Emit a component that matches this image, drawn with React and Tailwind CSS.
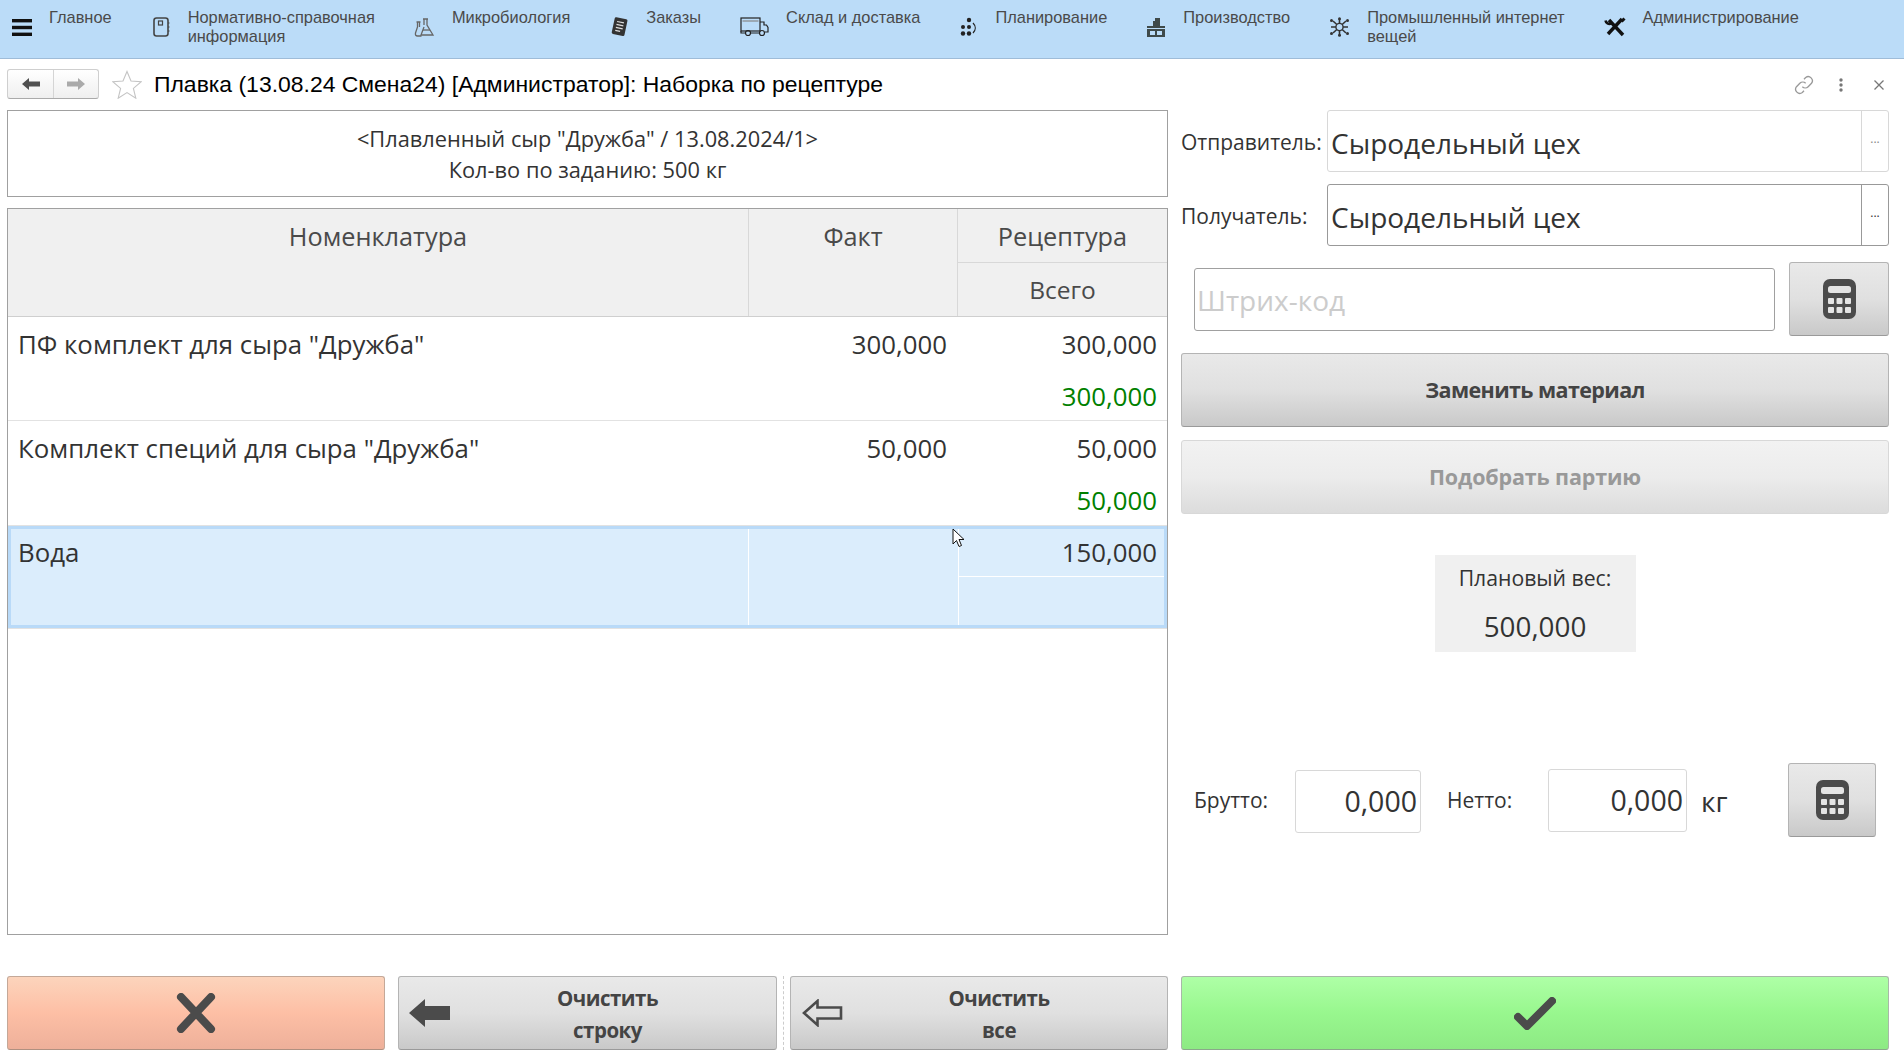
import React from "react";

const NavNotebook = () => (
  <svg width="20" height="20" viewBox="0 0 20 20" fill="none" stroke="#444" strokeWidth="1.6"><rect x="3" y="1" width="14" height="18" rx="2.5" /><rect x="7.5" y="4" width="4" height="4" strokeWidth="1.2" /><path d="M17 6h1.5M17 10h1.5M17 14h1.5" strokeWidth="1.2" /></svg>
);
const NavFlask = () => (
  <svg width="21" height="20" viewBox="0 0 21 20" fill="none" stroke="#666" strokeWidth="1.3"><path d="M9 2h5M10 2v6M13 2v6l6 10H7l3-8" /><path d="M2.5 5h4M3.5 5v5L1.5 16c-.5 2 .5 3 2 3h4M5.5 5v5" /><path d="M9 13h7" /></svg>
);
const NavOrders = () => (
  <svg width="20" height="20" viewBox="0 0 20 20"><g transform="rotate(12 10 10)"><rect x="4" y="1" width="13" height="17" rx="1.5" fill="#333" /><path d="M7 5h7M7 8h7M7 11h7M7 14h5" stroke="#ddd" strokeWidth="1.2" /></g></svg>
);
const NavTruck = () => (
  <svg width="29" height="20" viewBox="0 0 29 20" fill="none" stroke="#222" strokeWidth="1.2"><rect x="1" y="1" width="19" height="13" /><path d="M20 5h4v3h2.5l1.5 2.5V15h-3M1 14v2h4M11 16h8" /><circle cx="8" cy="16" r="2.5" /><circle cx="22" cy="16" r="2.5" /><path d="M2.5 4h16" stroke="#888" /></svg>
);
const NavPlan = () => (
  <svg width="19" height="20" viewBox="0 0 19 20" fill="#222"><circle cx="10" cy="3" r="2.2" /><circle cx="4" cy="10" r="2" /><circle cx="10" cy="10" r="2" /><circle cx="4" cy="16.5" r="2.2" /><circle cx="10" cy="16.5" r="2.2" /><path d="M14 6c3 3 3 7 0 10" fill="none" stroke="#222" strokeWidth="1.2" /></svg>
);
const NavFactory = () => (
  <svg width="20" height="20" viewBox="0 0 20 20"><path d="M1 20V9h6V4h2V1h5v8h5v11z" fill="#3f4a4a" /><rect x="4" y="14" width="5" height="4" fill="#bbdcf8" /><rect x="11" y="14" width="5" height="4" fill="#bbdcf8" /><rect x="1" y="11" width="18" height="1" fill="#bbdcf8" /></svg>
);
const NavIot = () => (
  <svg width="21" height="20" viewBox="0 0 21 20" stroke="#333" strokeWidth="1.6" fill="none"><path d="M10.5 2v16M2 10h17M4 4l13 12M17 4L4 16" /><circle cx="10.5" cy="10" r="3.6" fill="#bbdcf8" strokeWidth="1.4" /><circle cx="10.5" cy="1.8" r="1.5" fill="#333" stroke="none" /><circle cx="10.5" cy="18.2" r="1.5" fill="#333" stroke="none" /><circle cx="2.5" cy="3.5" r="1.5" fill="#333" stroke="none" /><circle cx="18.5" cy="3.5" r="1.5" fill="#333" stroke="none" /><circle cx="2.5" cy="16.5" r="1.5" fill="#333" stroke="none" /><circle cx="18.5" cy="16.5" r="1.5" fill="#333" stroke="none" /></svg>
);
const NavTools = () => (
  <svg width="22" height="20" viewBox="0 0 22 20" fill="none" stroke="#111"><path d="M5 3l14 15" strokeWidth="3.4" /><path d="M18 2L4 17" strokeWidth="3.4" /><path d="M1.5 3.5A4 4 0 0 0 7 6.5" strokeWidth="2.6" /><path d="M20.5 1.5l-3 3" strokeWidth="3" /></svg>
);

const Calc = () => (
  <svg width="33" height="40" viewBox="0 0 33 40"><rect width="33" height="40" rx="7" fill="#4b4b4b" /><rect x="5" y="7" width="23" height="7" rx="2.5" fill="#e4e4e4" />
    <g fill="#e4e4e4"><rect x="5" y="19" width="6" height="6" rx="1" /><rect x="13.5" y="19" width="6" height="6" rx="1" /><rect x="22" y="19" width="6" height="6" rx="1" /><rect x="5" y="28" width="6" height="6" rx="1" /><rect x="13.5" y="28" width="6" height="6" rx="1" /><rect x="22" y="28" width="6" height="6" rx="1" /></g>
  </svg>
);

const navItems = [
  [NavNotebook, ["Нормативно-справочная", "информация"]],
  [NavFlask, ["Микробиология"]],
  [NavOrders, ["Заказы"]],
  [NavTruck, ["Склад и доставка"]],
  [NavPlan, ["Планирование"]],
  [NavFactory, ["Производство"]],
  [NavIot, ["Промышленный интернет", "вещей"]],
  [NavTools, ["Администрирование"]],
];

const Row = ({ name, fact, plan, green, height }) => (
  <div className={"flex border-b border-[#e2e2e2] text-[#333] " + height}>
    <div className="w-[742px] pl-[10px] pt-[9px] leading-[36px]">{name}</div>
    <div className="w-[209px] pr-[12px] pt-[9px] text-right leading-[36px]">{fact}</div>
    <div className="flex-1 pr-[10px] pt-[9px] text-right leading-[36px]">
      <div>{plan}</div>
      <div className="mt-[16px] text-[#008000]">{green}</div>
    </div>
  </div>
);

const btnGray = "rounded-[3px] border border-[#b4b4b4] border-b-[#9a9a9a] bg-linear-to-b from-[#e9e9e9] via-[#e0e0e0] to-[#c9c9c9]";

export default function App() {
  return (
    <div className="relative flex h-[1058px] w-[1904px] flex-col overflow-hidden bg-white font-['Open_Sans',sans-serif]">
      <nav className="flex h-[59px] shrink-0 items-start gap-[39px] border-b border-[#9fbcd8] bg-[#bbdcf8] pl-[12px] font-['Liberation_Sans',sans-serif] text-[16.4px] leading-[19px] text-[#4a4a4a]">
        <div className="flex items-start gap-[17px]">
          <svg className="mt-[19px]" width="20" height="17" viewBox="0 0 20 17" fill="#111"><rect width="20" height="3.4" /><rect y="6.8" width="20" height="3.4" /><rect y="13.6" width="20" height="3.4" /></svg>
          <div className="pt-[8px]">Главное</div>
        </div>
        {navItems.map(([Icon, lines], i) => (
          <div key={i} className="flex items-start gap-[17px]">
            <div className="mt-[17px]"><Icon /></div>
            <div className="whitespace-nowrap pt-[8px]">{lines.map((l) => <div key={l}>{l}</div>)}</div>
          </div>
        ))}
      </nav>

      <div className="flex h-[51px] shrink-0 items-center pl-[7px] pr-[20px] font-['Liberation_Sans',sans-serif]">
        <div className="mt-[-1px] flex h-[30px] w-[92px] rounded-[3px] border border-[#cfcfcf] border-b-[#aaa] bg-linear-to-b from-white to-[#efefef]">
          <div className="flex w-[46px] items-center justify-center border-r border-[#d5d5d5]">
            <svg width="18" height="12" viewBox="0 0 18 12" fill="#505050"><path d="M0 6l7-6v3.5h11v5H7V12z" /></svg>
          </div>
          <div className="flex flex-1 items-center justify-center">
            <svg width="18" height="12" viewBox="0 0 18 12" fill="#aaa"><path d="M18 6l-7-6v3.5H0v5h11V12z" /></svg>
          </div>
        </div>
        <svg className="ml-[13px]" width="30" height="29" viewBox="0 0 30 29" fill="none" stroke="#c4c4c4" strokeWidth="1.1"><path d="M15 1.5l4 9.5 10 .8-7.6 6.6 2.4 9.8L15 22.6l-8.8 5.6 2.4-9.8L1 11.8l10-.8z" /></svg>
        <div className="ml-[12px] whitespace-nowrap text-[22.95px] text-black">Плавка (13.08.24 Смена24) [Администратор]: Наборка по рецептуре</div>
        <div className="ml-auto flex items-center">
          <svg width="20" height="20" viewBox="0 0 24 24" fill="none" stroke="#999" strokeWidth="1.6"><path d="M10 14a5 5 0 0 0 7 0l4-4a5 5 0 0 0-7-7l-2 2" /><path d="M14 10a5 5 0 0 0-7 0l-4 4a5 5 0 0 0 7 7l2-2" /></svg>
          <svg className="ml-[25px]" width="4" height="14" viewBox="0 0 4 14" fill="#777"><circle cx="2" cy="2" r="1.7" /><circle cx="2" cy="7" r="1.7" /><circle cx="2" cy="12" r="1.7" /></svg>
          <svg className="ml-[31px]" width="10" height="10" viewBox="0 0 10 10" stroke="#777" strokeWidth="1.3"><path d="M0.5 0.5l9 9M9.5 0.5l-9 9" /></svg>
        </div>
      </div>

      <div className="flex h-[948px] shrink-0 pl-[7px]">
        <div className="flex w-[1161px] shrink-0 flex-col">
          <div className="flex h-[87px] shrink-0 flex-col justify-center border border-[#a0a0a0] text-center text-[21.8px] leading-[31px] text-[#333]">
            <div>&lt;Плавленный сыр "Дружба" / 13.08.2024/1&gt;</div>
            <div>Кол-во по заданию: 500 кг</div>
          </div>
          <div className="mt-[11px] flex h-[727px] shrink-0 flex-col border border-[#a0a0a0] text-[25.8px]">
            <div className="flex h-[108px] shrink-0 border-b border-[#cfcfcf] bg-[#f0f0f0] text-center text-[25.3px] text-[#4a4a4a]">
              <div className="w-[741px] border-r border-[#d8d8d8] pt-[8px] leading-[38px]">Номенклатура</div>
              <div className="w-[209px] border-r border-[#d8d8d8] pt-[8px] leading-[38px]">Факт</div>
              <div className="flex flex-1 flex-col">
                <div className="h-[54px] border-b border-[#d8d8d8] pt-[8px] leading-[38px]">Рецептура</div>
                <div className="flex-1 pt-[8px] text-[24.5px] leading-[38px]">Всего</div>
              </div>
            </div>
            <Row height="h-[104px]" name={'ПФ комплект для сыра "Дружба"'} fact="300,000" plan="300,000" green="300,000" />
            <Row height="h-[105px]" name={'Комплект специй для сыра "Дружба"'} fact="50,000" plan="50,000" green="50,000" />
            <div className="flex h-[102px] border-[3px] border-[#b9daf8] bg-[#dbedfc] text-[#333]">
              <div className="w-[738px] border-r border-white pl-[7px] pt-[5px] leading-[36px]">Вода</div>
              <div className="w-[210px] border-r border-white"></div>
              <div className="flex flex-1 flex-col">
                <div className="h-[48px] border-b border-white pr-[7px] pt-[5px] text-right leading-[36px]">150,000</div>
              </div>
            </div>
            <div className="h-px bg-[#e2e2e2]"></div>
          </div>
          <div className="mt-[41px] flex h-[74px] shrink-0 text-[20.5px] font-bold leading-[32px] tracking-[-0.5px] text-[#444]">
            <div className="flex w-[378px] items-center justify-center rounded-[3px] border border-[#c4a898] border-b-[#b09080] bg-linear-to-b from-[#fcd4bc] via-[#fdbfa5] to-[#eeb09a]">
              <svg width="40" height="40" viewBox="0 0 40 40" stroke="#4b4b4b" strokeWidth="8" strokeLinecap="round"><path d="M5 4l30 32M35 4L5 36" /></svg>
            </div>
            <div className={"relative ml-[13px] flex w-[379px] flex-col items-center justify-center pl-[40px] pt-[2px] " + btnGray}>
              <svg className="absolute left-[10px] top-[22px]" width="41" height="28" viewBox="0 0 41 28" fill="#4b4b4b"><path d="M0 14L16 0v7h25v14H16v7z" /></svg>
              <div>Очистить</div>
              <div>строку</div>
            </div>
            <div className="ml-[6px] mr-[6px] w-px border-l border-dashed border-[#ccc]"></div>
            <div className={"relative flex w-[378px] flex-col items-center justify-center pl-[40px] pt-[2px] " + btnGray}>
              <svg className="absolute left-[11px] top-[22px]" width="41" height="28" viewBox="0 0 41 28" fill="none" stroke="#4b4b4b" strokeWidth="2.6"><path d="M2 14L15.5 2v6.5H39v11H15.5V26z" /></svg>
              <div>Очистить</div>
              <div>все</div>
            </div>
          </div>
        </div>

        <div className="ml-[13px] flex w-[708px] shrink-0 flex-col text-[#333]">
          <div className="flex h-[62px] shrink-0 items-center text-[21px]">
            <div className="w-[146px] shrink-0 pt-[3px]">Отправитель:</div>
            <div className="flex h-full flex-1 rounded-[3px] border border-[#d8d8d8] text-[28px]">
              <div className="flex flex-1 items-center pl-[3px] pt-[3px]">Сыродельный цех</div>
              <div className="flex w-[27px] items-center justify-center border-l border-[#d8d8d8] pb-[4px] text-[12px] text-[#888]">...</div>
            </div>
          </div>
          <div className="mt-[12px] flex h-[62px] shrink-0 items-center text-[21px]">
            <div className="w-[146px] shrink-0 pt-[3px]">Получатель:</div>
            <div className="flex h-full flex-1 rounded-[3px] border border-[#999] text-[28px]">
              <div className="flex flex-1 items-center pl-[3px] pt-[3px]">Сыродельный цех</div>
              <div className="flex w-[27px] items-center justify-center border-l border-[#999] pb-[4px] text-[12px] text-[#333]">...</div>
            </div>
          </div>
          <div className="mt-[16px] flex h-[74px] shrink-0 items-start pl-[13px]">
            <div className="mt-[6px] flex h-[63px] w-[581px] items-center rounded-[3px] border border-[#a0a0a0] pl-[2px] pt-[1px] text-[28px] text-[#cccccc]">Штрих-код</div>
            <div className={"ml-[14px] flex h-[74px] w-[100px] items-center justify-center " + btnGray}><Calc /></div>
          </div>
          <div className={"mt-[17px] flex h-[74px] shrink-0 items-center justify-center pt-[1px] text-[21.5px] font-bold tracking-[-0.6px] text-[#444] " + btnGray}>Заменить материал</div>
          <div className="mt-[13px] flex h-[74px] shrink-0 items-center justify-center rounded-[3px] border border-[#d8d8d8] bg-linear-to-b from-[#f2f2f2] via-[#ececec] to-[#dcdcdc] text-[21.5px] font-bold tracking-[-0.15px] text-[#999]">Подобрать партию</div>
          <div className="mx-auto mt-[41px] flex h-[97px] w-[201px] shrink-0 flex-col items-center bg-[#f0f0f0]">
            <div className="mt-[6px] text-[21.2px] leading-[34px]">Плановый вес:</div>
            <div className="mt-[13px] text-[27.8px] leading-[36px]">500,000</div>
          </div>
          <div className="mt-[111px] flex h-[74px] shrink-0 items-center pl-[13px] text-[21px]">
            <div className="w-[101px] pt-[1px]">Брутто:</div>
            <div className="mb-[-2px] flex h-[63px] w-[126px] items-center justify-end rounded-[3px] border border-[#d8d8d8] pr-[3px] pt-[1px] text-[28.5px]">0,000</div>
            <div className="ml-[26px] w-[101px] pt-[1px]">Нетто:</div>
            <div className="mb-[-1px] flex h-[63px] w-[139px] items-center justify-end rounded-[3px] border border-[#d8d8d8] pr-[3px] text-[28.5px]">0,000</div>
            <div className="ml-[14px] w-[87px] pt-[1px] text-[28px]">кг</div>
            <div className={"flex h-[74px] w-[88px] items-center justify-center " + btnGray}><Calc /></div>
          </div>
          <div className="mt-[139px] flex h-[74px] shrink-0 items-center justify-center rounded-[3px] border border-[#a8b8a8] border-b-[#8aa88a] bg-linear-to-b from-[#aeffa6] via-[#98f78e] to-[#8dea84]">
            <svg width="42" height="33" viewBox="0 0 42 33" fill="none" stroke="#4b4b4b" strokeWidth="8" strokeLinecap="round" strokeLinejoin="round"><path d="M4 20l9 9L38 4" /></svg>
          </div>
        </div>
      </div>

      <svg className="absolute left-[952px] top-[528px]" width="14" height="20" viewBox="0 0 14 20"><path d="M1 1v15l3.5-3.5 2.5 6 2.5-1-2.5-6H12z" fill="#fff" stroke="#111" strokeWidth="1" /></svg>
    </div>
  );
}
